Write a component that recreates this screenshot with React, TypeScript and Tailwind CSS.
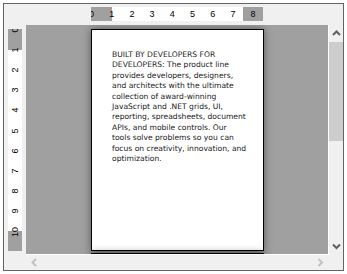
const PX_PER_INCH = 20.2

const lines = [
  'BUILT BY DEVELOPERS FOR',
  'DEVELOPERS: The product line',
  'provides developers, designers,',
  'and architects with the ultimate',
  'collection of award-winning',
  'JavaScript and .NET grids, UI,',
  'reporting, spreadsheets, document',
  'APIs, and mobile controls. Our',
  'tools solve problems so you can',
  'focus on creativity, innovation, and',
  'optimization.',
]

function Chevron({ dir, color }: { dir: 'up' | 'down' | 'left' | 'right'; color: string }) {
  const points = {
    up: '1,5 4.5,1.5 8,5',
    down: '1,1.5 4.5,5 8,1.5',
    left: '5,1 1.5,4.5 5,8',
    right: '1.5,1 5,4.5 1.5,8',
  }[dir]
  const vertical = dir === 'up' || dir === 'down'
  return (
    <svg width={vertical ? 9 : 7} height={vertical ? 7 : 9} viewBox={vertical ? '0 0 9 7' : '0 0 7 9'}>
      <polyline points={points} fill="none" stroke={color} strokeWidth="2" />
    </svg>
  )
}

function HorizontalRuler() {
  return (
    <div className="relative flex h-[14px] w-[172px] overflow-hidden">
      <div className="w-[21px] bg-[#a0a0a0]" />
      <div className="flex-1 bg-white" />
      <div className="w-[20px] bg-[#a0a0a0]" />
      {[0, 1, 2, 3, 4, 5, 6, 7, 8].map((n) => (
        <span
          key={n}
          className="absolute top-0 flex h-[14px] w-[10px] -translate-x-1/2 items-center justify-center text-[9px] leading-none text-black"
          style={{ left: n * PX_PER_INCH + 0.5 }}
        >
          {n}
        </span>
      ))}
    </div>
  )
}

function VerticalRuler() {
  return (
    <div className="relative flex h-[222px] w-[14px] flex-col overflow-hidden">
      <div className="h-[21px] bg-[#a0a0a0]" />
      <div className="flex-1 bg-white" />
      <div className="h-[20px] bg-[#a0a0a0]" />
      {[0, 1, 2, 3, 4, 5, 6, 7, 8, 9, 10].map((n) => (
        <span
          key={n}
          className="absolute left-0 flex h-[14px] w-[14px] -translate-y-1/2 -rotate-90 items-center justify-center text-[9px] leading-none text-black"
          style={{ top: n * PX_PER_INCH + 0.5 }}
        >
          {n}
        </span>
      ))}
    </div>
  )
}

export default function App() {
  return (
    <div className="h-[274px] w-[347px] bg-white p-[3px] font-['Liberation_Sans',sans-serif]">
      <div className="flex h-[268px] w-[341px] flex-col border border-[#646464] bg-[#f0f0f0]">
        {/* top ruler */}
        <div className="h-[21px] pl-[87px] pt-[3px]">
          <HorizontalRuler />
        </div>

        {/* middle */}
        <div className="flex h-[230px]">
          <div className="w-[22px] pl-[4px] pt-[4px]">
            <VerticalRuler />
          </div>
          <div className="h-[230px] w-[303px] overflow-hidden border-b border-r border-white bg-[#a0a0a0] pl-[65px] pt-[4px]">
            <div className="flex flex-col gap-[2px]">
              <div className="h-[222px] w-[173px] shrink-0 border border-black bg-white px-[20px] py-[20px] shadow-[0_0_8px_rgba(0,0,0,0.45)]">
                <div className="font-['DejaVu_Sans',sans-serif] text-[7.6px] leading-[10.4px] whitespace-nowrap text-[#1a1a1a]">
                  {lines.map((line) => (
                    <div key={line}>{line}</div>
                  ))}
                </div>
              </div>
              <div className="h-[222px] w-[173px] shrink-0 border border-black bg-white shadow-[0_0_8px_rgba(0,0,0,0.45)]" />
            </div>
          </div>
          <div className="flex w-[14px] flex-col">
            <div className="flex h-[17px] items-center justify-center">
              <Chevron dir="up" color="#606060" />
            </div>
            <div className="h-[99px] bg-[#cdcdcd]" />
            <div className="flex-1" />
            <div className="flex h-[17px] items-center justify-center">
              <Chevron dir="down" color="#606060" />
            </div>
          </div>
        </div>

        {/* bottom scrollbar */}
        <div className="flex h-[15px]">
          <div className="w-[22px]" />
          <div className="flex w-[302px] justify-between">
            <div className="flex w-[16px] items-center justify-center">
              <Chevron dir="left" color="#c2c2c2" />
            </div>
            <div className="flex w-[16px] items-center justify-center">
              <Chevron dir="right" color="#c2c2c2" />
            </div>
          </div>
        </div>
      </div>
    </div>
  )
}
